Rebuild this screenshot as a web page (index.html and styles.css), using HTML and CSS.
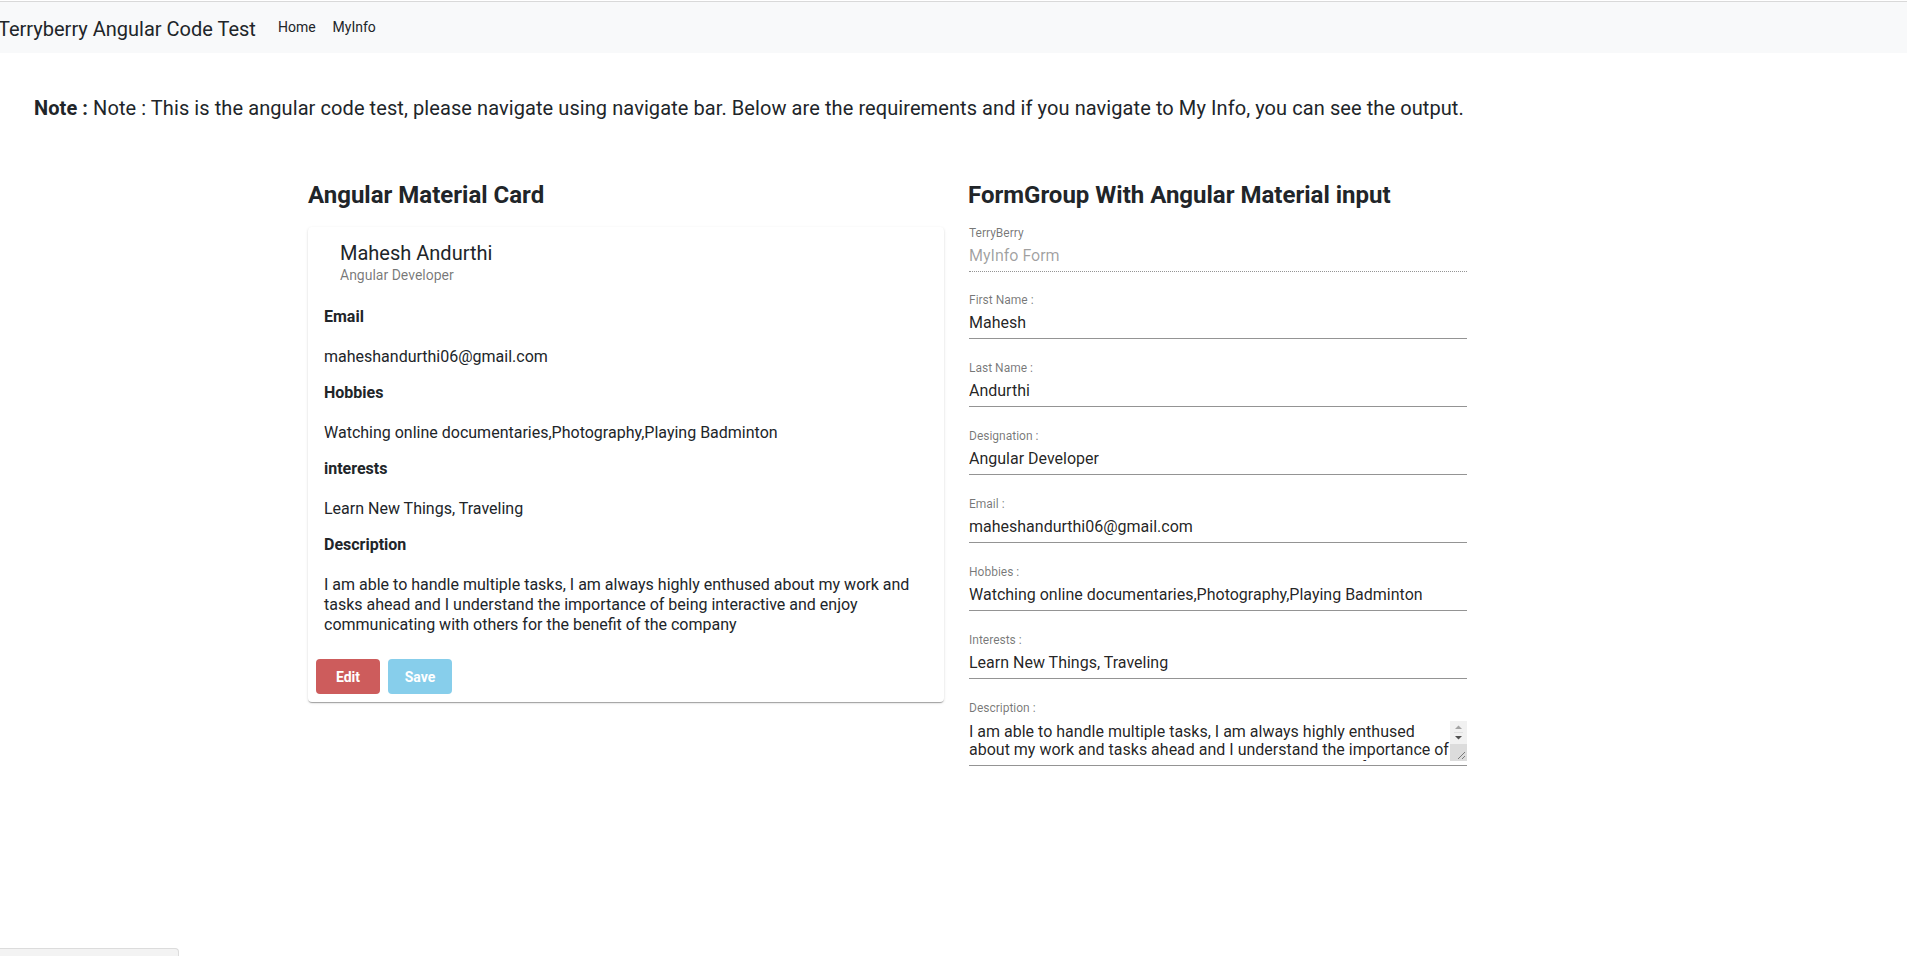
FILE: index.html
```html
<!DOCTYPE html>
<html lang="en">
<head>
<meta charset="utf-8">
<title>Terryberry Angular Code Test</title>
<link rel="stylesheet" href="styles.css">
</head>
<body>
<nav class="navbar">
  <span class="brand">Terryberry Angular Code Test</span>
  <a class="nav-link" href="#">Home</a>
  <a class="nav-link" href="#">MyInfo</a>
</nav>

<p class="note"><strong>Note :</strong> Note : This is the angular code test, please navigate using navigate bar. Below are the requirements and if you navigate to My Info, you can see the output.</p>

<div class="content">
  <section class="col-card">
    <h2 class="section-title">Angular Material Card</h2>
    <div class="card">
      <div class="card-header">
        <div class="card-name">Mahesh Andurthi</div>
        <div class="card-sub">Angular Developer</div>
      </div>
      <div class="card-body">
        <div class="item-label">Email</div>
        <p class="item-value">maheshandurthi06@gmail.com</p>
        <div class="item-label">Hobbies</div>
        <p class="item-value">Watching online documentaries,Photography,Playing Badminton</p>
        <div class="item-label">interests</div>
        <p class="item-value">Learn New Things, Traveling</p>
        <div class="item-label">Description</div>
        <p class="item-value">I am able to handle multiple tasks, I am always highly enthused about my work and tasks ahead and I understand the importance of being interactive and enjoy communicating with others for the benefit of the company</p>
      </div>
      <div class="card-actions">
        <button class="btn btn-edit">Edit</button>
        <button class="btn btn-save">Save</button>
      </div>
    </div>
  </section>

  <section class="col-form">
    <h2 class="section-title section-title-form">FormGroup With Angular Material input</h2>
    <form class="form">
      <label class="field field-disabled">
        <span class="field-label">TerryBerry</span>
        <input class="field-input" value="MyInfo Form" disabled>
      </label>
      <label class="field">
        <span class="field-label">First Name :</span>
        <input class="field-input" value="Mahesh">
      </label>
      <label class="field">
        <span class="field-label">Last Name :</span>
        <input class="field-input" value="Andurthi">
      </label>
      <label class="field">
        <span class="field-label">Designation :</span>
        <input class="field-input" value="Angular Developer">
      </label>
      <label class="field">
        <span class="field-label">Email :</span>
        <input class="field-input" value="maheshandurthi06@gmail.com">
      </label>
      <label class="field">
        <span class="field-label">Hobbies :</span>
        <input class="field-input" value="Watching online documentaries,Photography,Playing Badminton">
      </label>
      <label class="field">
        <span class="field-label">Interests :</span>
        <input class="field-input" value="Learn New Things, Traveling">
      </label>
      <label class="field">
        <span class="field-label">Description :</span>
        <span class="textarea-wrap">
          <textarea class="field-textarea">I am able to handle multiple tasks, I am always highly enthused about my work and tasks ahead and I understand the importance of being interactive and enjoy communicating with others for the benefit of the company</textarea>
          <span class="fake-scrollbar" aria-hidden="true">
            <svg class="sb-arrows" width="17" height="23" viewBox="0 0 17 23">
              <path d="M5 8 L8.5 4.5 L12 8 Z" fill="#a3a3a3"/>
              <line x1="4" y1="11.5" x2="13" y2="11.5" stroke="#e0e0e0" stroke-width="1"/>
              <path d="M5 15 L8.5 18.5 L12 15 Z" fill="#505050"/>
            </svg>
            <svg class="sb-resizer" width="17" height="17" viewBox="0 0 17 17">
              <rect width="17" height="17" fill="#dcdcdc"/>
              <line x1="15" y1="8" x2="8" y2="15" stroke="#7a7a7a" stroke-width="1"/>
              <line x1="15" y1="12" x2="12" y2="15" stroke="#7a7a7a" stroke-width="1"/>
            </svg>
          </span>
        </span>
      </label>
    </form>
  </section>
</div>

<div class="status-bar"></div>
</body>
</html>
```

FILE: styles.css
```css
html, body {
  margin: 0;
  padding: 0;
  background: #ffffff;
}

body {
  font-family: Roboto, "Liberation Sans", sans-serif;
  color: #212529;
  padding-top: 1px;
}

.navbar {
  display: flex;
  align-items: center;
  background: #f8f9fa;
  border-top: 1px solid #d9d9d9;
  box-sizing: border-box;
  height: 52px;
}

.brand {
  font-size: 20px;
  line-height: 30px;
  margin-left: -2px;
  margin-right: 22px;
  color: #212529;
  position: relative;
  top: 1px;
}

.nav-link {
  font-size: 14px;
  line-height: 20px;
  color: #212529;
  text-decoration: none;
  margin-right: 17px;
  position: relative;
  top: -1px;
}

.note {
  margin: 0;
  padding: 43px 0 0 34px;
  font-size: 20px;
  line-height: 24px;
  letter-spacing: 0.08px;
  color: #212529;
}

.note strong {
  font-weight: 700;
}

.content {
  display: flex;
  gap: 24px;
  padding-left: 308px;
  padding-top: 60px;
}

.col-card {
  width: 636px;
}

.col-form {
  width: 499px;
}

.section-title {
  margin: 0 0 17px 0;
  font-size: 24px;
  line-height: 30px;
  font-weight: 700;
  color: #212529;
}

.section-title-form {
  margin-bottom: 16px;
}

.card {
  background: #fff;
  border-radius: 4px;
  box-shadow: 0 2px 1px -1px rgba(0,0,0,.2), 0 1px 1px 0 rgba(0,0,0,.14), 0 1px 3px 0 rgba(0,0,0,.12);
  padding: 14px 16px 8px 16px;
}

.card-header {
  padding-left: 16px;
  margin-bottom: 20px;
}

.card-name {
  font-size: 20px;
  line-height: 24px;
  color: #212529;
}

.card-sub {
  font-size: 14px;
  line-height: 20px;
  color: rgba(0,0,0,.54);
}

.item-label {
  font-size: 16px;
  line-height: 24px;
  font-weight: 700;
  margin-bottom: 18px;
}

.item-value {
  margin: 0 0 14px 0;
  font-size: 16px;
  line-height: 20px;
}

.card-body .item-value:last-child {
  margin-bottom: 0;
}

.card-actions {
  display: flex;
  gap: 8px;
  margin-left: -8px;
  margin-top: 24px;
}

.btn {
  width: 64px;
  height: 35px;
  border: none;
  border-radius: 4px;
  color: #fff;
  font-family: Roboto, "Liberation Sans", sans-serif;
  font-size: 14px;
  font-weight: 700;
  padding: 0;
}

.btn-edit {
  background: #cd5c5c;
}

.btn-save {
  background: #87ceeb;
}

.form {
  display: flex;
  flex-direction: column;
  padding-left: 1px;
}

.field {
  display: flex;
  flex-direction: column;
  border-bottom: 1px solid rgba(0,0,0,.42);
  margin-bottom: 22px;
}

.field-disabled {
  border-bottom: 1px dotted rgba(0,0,0,.42);
  margin-bottom: 21px;
}

.field-label {
  font-size: 12px;
  line-height: 14px;
  color: rgba(0,0,0,.54);
  margin-bottom: 6px;
}

.field-input {
  font-family: Roboto, "Liberation Sans", sans-serif;
  font-size: 16px;
  line-height: 20px;
  height: 20px;
  border: none;
  outline: none;
  padding: 0 0 5px 0;
  margin: 0;
  background: transparent;
  color: rgba(0,0,0,.87);
}

.field-input:disabled {
  color: rgba(0,0,0,.38);
}

.textarea-wrap {
  display: flex;
  height: 40px;
  margin-bottom: 4px;
}

.field-textarea {
  flex: 1;
  min-width: 0;
  font-family: Roboto, "Liberation Sans", sans-serif;
  font-size: 16px;
  line-height: 18px;
  height: 40px;
  border: none;
  outline: none;
  padding: 2px 0;
  margin: 0;
  box-sizing: border-box;
  resize: none;
  overflow: hidden;
  color: rgba(0,0,0,.87);
  background: transparent;
}

.fake-scrollbar {
  display: flex;
  flex-direction: column;
  width: 17px;
  height: 40px;
  background: #f1f1f1;
}

.sb-arrows {
  display: block;
  flex: none;
}

.sb-resizer {
  display: block;
  flex: none;
}

.status-bar {
  position: fixed;
  left: 0;
  bottom: 0;
  width: 178px;
  height: 7px;
  background: #f3f3f3;
  border: 1px solid #dcdcdc;
  border-left: none;
  border-bottom: none;
  border-top-right-radius: 4px;
}
```
